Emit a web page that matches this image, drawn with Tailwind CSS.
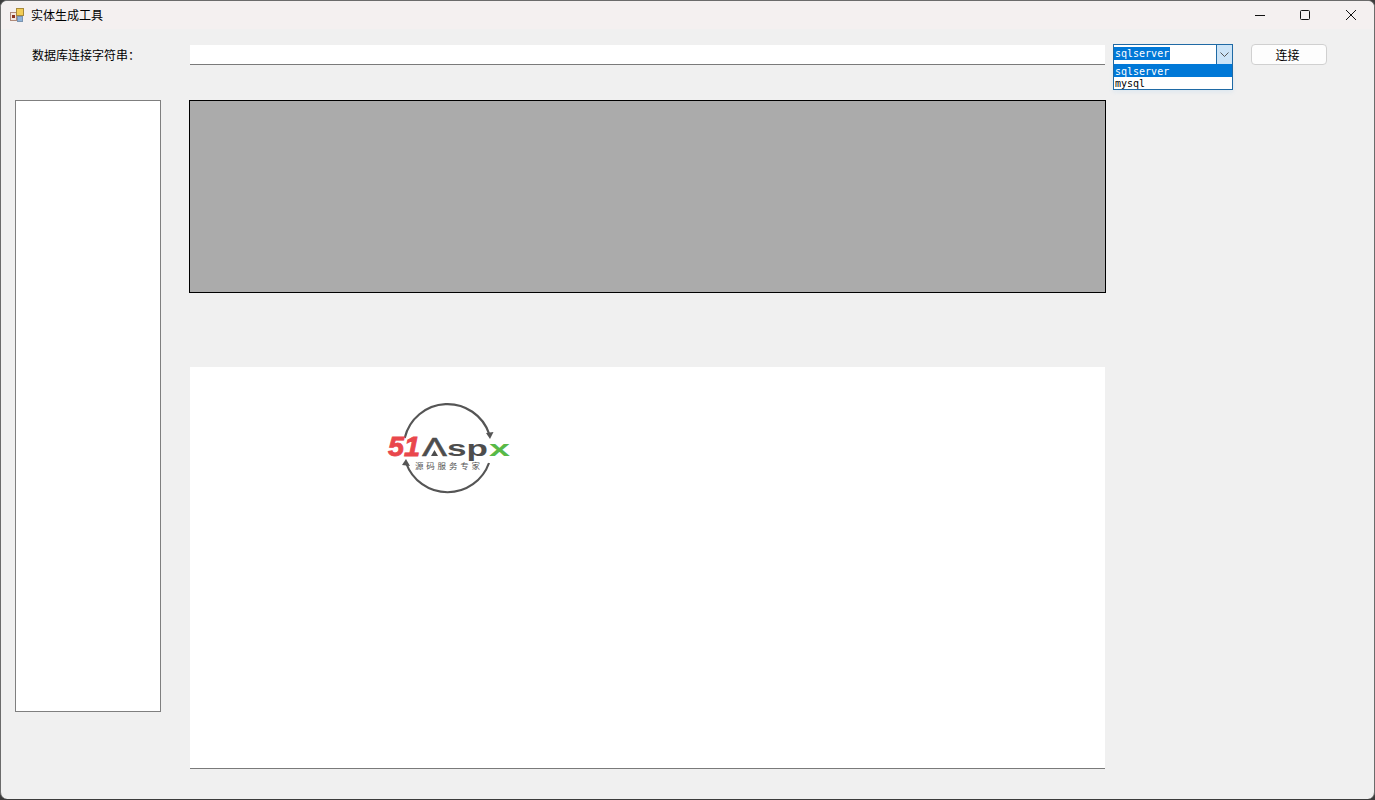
<!DOCTYPE html>
<html lang="zh">
<head>
<meta charset="utf-8">
<script src="https://cdn.jsdelivr.net/npm/@tailwindcss/browser@4"></script>
<title>实体生成工具</title>
</head>
<body class="m-0 w-[1375px] h-[800px] overflow-hidden bg-[#3c3c3c] font-['Noto_Sans_CJK_SC','Liberation_Sans',sans-serif] text-black">
<div class="w-[1375px] h-[799px] rounded-[7px] bg-[#f0f0f0] flex flex-col overflow-hidden border-l border-r border-t border-[#6b6b6b]">
  <header class="h-[28px] shrink-0 flex items-center bg-[#f4f0f0]">
    <svg class="ml-[9px] w-[14px] h-[14px]" viewBox="0 0 14 14">
      <rect x="0.5" y="4.5" width="6" height="8" fill="#f3e6e0" stroke="#b08a7a"/>
      <rect x="2" y="7" width="3" height="3" fill="#8a3320"/>
      <rect x="6.5" y="0.5" width="7" height="7" fill="#f2cc55" stroke="#a8893a"/>
      <rect x="7.5" y="8.5" width="5" height="5" fill="#8fb3d9" stroke="#7c94b0"/>
    </svg>
    <span class="ml-[7px] -mt-[1px] text-[12px] leading-none">实体生成工具</span>
    <div class="ml-auto flex items-center mr-[17px]">
      <svg class="w-[12px] h-[12px] mr-[33px]" viewBox="0 0 12 12"><path d="M1 6.5H11" stroke="#111" stroke-width="1" fill="none"/></svg>
      <svg class="w-[12px] h-[12px] mr-[34px]" viewBox="0 0 12 12"><rect x="1.5" y="1.5" width="9" height="9" rx="1" stroke="#111" stroke-width="1" fill="none"/></svg>
      <svg class="w-[12px] h-[12px]" viewBox="0 0 12 12"><path d="M1 1L11 11M11 1L1 11" stroke="#111" stroke-width="1" fill="none"/></svg>
    </div>
  </header>

  <main class="flex-1 flex flex-col">
    <div class="h-[22px] mt-[15px] flex items-start">
      <label class="ml-[31px] w-[158px] text-[12px] leading-[22px]">数据库连接字符串<span class="font-['Noto_Sans_CJK_TC',sans-serif]">：</span></label>
      <div class="w-[915px] h-[20px] mt-[1px] bg-white border-b border-[#7a7a7a]"></div>
      <div class="relative ml-[8px] w-[120px] h-[21px]">
        <div class="w-[120px] h-[21px] bg-white border border-[#1f6aa5] flex items-center">
          <span class="-mt-[2px] px-[1px] h-[13px] bg-[#0078d7] text-white font-['DejaVu_Sans_Mono',monospace] text-[10px] leading-[13px]">sqlserver</span>
          <div class="ml-auto w-[16px] h-[19px] bg-[#cce4f7] border-l border-[#1f6aa5] flex items-center justify-center">
            <svg class="w-[9px] h-[6px]" viewBox="0 0 9 6"><path d="M0.5 0.5L4.5 4.5L8.5 0.5" stroke="#555" fill="none"/></svg>
          </div>
        </div>
        <ul class="absolute left-0 top-[20px] w-[120px] h-[26px] bg-white border-x border-b border-[#1f6aa5] font-['DejaVu_Sans_Mono',monospace] text-[10px] shadow-[0_2px_4px_rgba(120,190,240,0.15)]">
          <li class="h-[13px] leading-[16px] overflow-hidden pl-[1px] bg-[#0078d7] text-white">sqlserver</li>
          <li class="h-[12px] leading-[14px] pl-[1px]">mysql</li>
        </ul>
      </div>
      <button class="ml-[18px] w-[76px] h-[21px] pr-[3px] bg-[#fdfdfd] border border-[#d0d0d0] rounded-[4px] text-[12px] leading-none">连接</button>
    </div>

    <div class="mt-[34px] flex items-start">
      <div class="ml-[14px] w-[146px] h-[612px] bg-white border border-[#7f7f7f]"></div>
      <div class="ml-[28px] flex flex-col">
        <div class="w-[917px] h-[193px] bg-[#ababab] border border-black"></div>
        <div class="ml-[1px] mt-[74px] w-[915px] h-[402px] bg-white border-b border-[#7a7a7a] pl-[196px] pt-[34px]">
          <svg class="w-[126px] h-[96px]" viewBox="0 0 126 96">
            <path d="M18.7 37 A44 44 0 0 1 103.2 33" stroke="#555" stroke-width="2.2" fill="none"/>
            <path d="M20.1 62 A44 44 0 0 0 103 62" stroke="#555" stroke-width="2.2" fill="none"/>
            <path d="M100 32L107.5 31L104 38Z" fill="#555"/>
            <path d="M16 64L24 65L20 58Z" fill="#555"/>
            <text x="2" y="55" font-family="Liberation Sans" font-weight="700" font-style="italic" font-size="27" fill="#e9474c" stroke="#e9474c" stroke-width="0.8" textLength="32" lengthAdjust="spacingAndGlyphs">51</text>
            <text x="36" y="55" font-family="Liberation Sans" font-size="25" fill="#4d4d4d" stroke="#4d4d4d" stroke-width="0.5" textLength="25" lengthAdjust="spacingAndGlyphs">Λ</text>
            <path d="M48.5 49L52 55H45Z" fill="#4d4d4d"/>
            <text x="61" y="55" font-family="Liberation Sans" font-weight="700" font-size="22" fill="#4d4d4d" textLength="41" lengthAdjust="spacingAndGlyphs">sp</text>
            <text x="103" y="55" font-family="Liberation Sans" font-weight="700" font-size="22" fill="#58b948" textLength="21" lengthAdjust="spacingAndGlyphs">x</text>
            <text x="29" y="68" font-family="Noto Sans CJK SC" font-size="8.5" fill="#555" textLength="65">源码服务专家</text>
          </svg>
        </div>
      </div>
    </div>
  </main>
</div>
</body>
</html>
